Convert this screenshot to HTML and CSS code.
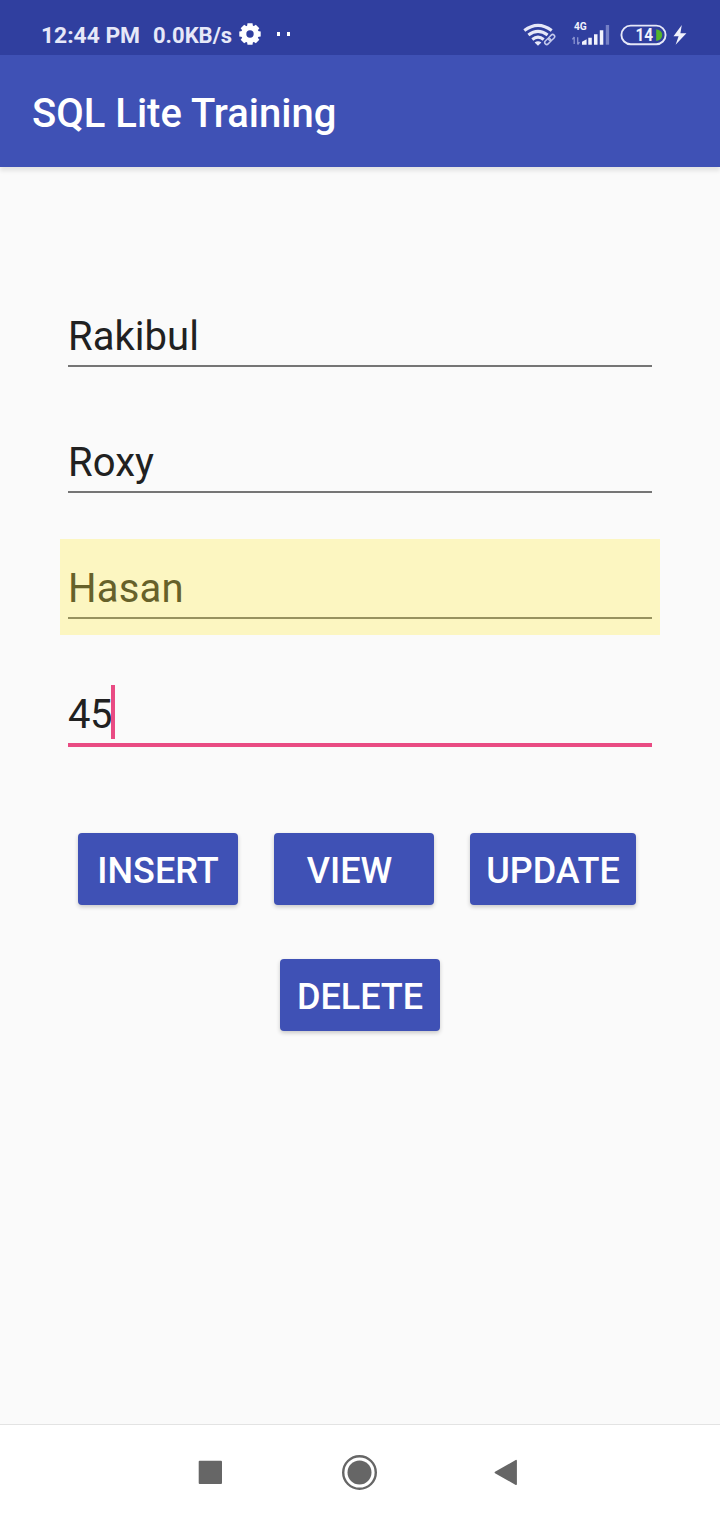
FILE: index.html
```html
<!DOCTYPE html>
<html lang="en">
<head>
<meta charset="utf-8">
<title>SQL Lite Training</title>
<link rel="stylesheet" href="styles.css">
</head>
<body>
<div class="screen">
  <div class="status">
    <span class="clock">12:44 PM</span>
    <span class="speed">0.0KB/s</span>
    <svg class="gear" width="24" height="24" viewBox="-12 -12 24 24">
      <g fill="#fff">
        <path id="tooth" d="M-3-7.5L-2.5-10.7H2.5L3-7.5V7.5L2.5 10.7H-2.5L-3 7.5Z"/>
        <use href="#tooth" transform="rotate(45)"/>
        <use href="#tooth" transform="rotate(90)"/>
        <use href="#tooth" transform="rotate(135)"/>
        <circle r="8.8"/>
      </g>
      <circle r="3.7" fill="#303f9f"/>
    </svg>
    <svg class="dots" width="14" height="4" viewBox="0 0 14 4"><path fill="#fff" d="M0 0h3v4H0zM10 0h3v4h-3z"/></svg>
    <svg class="indicators" width="170" height="30" viewBox="520 20 170 30">
      <g fill="none" stroke="#e6e8f8" stroke-width="3.1">
        <path d="M524.3 30.6Q538 20.3 551.7 30.6"/>
        <path d="M528.4 35.1Q538 27.7 547.6 35.1"/>
        <path d="M532.3 39.4Q538 35 543.7 39.4"/>
      </g>
      <path d="M534.6 42.6Q538 39.7 541.4 42.6L538 45.7Z" fill="#e6e8f8"/>
      <rect x="542.7" y="36.4" width="14" height="6.2" rx="3.1" transform="rotate(-45 549.7 39.5)" fill="#303f9f"/>
      <g fill="none" stroke="#c3c9ed" stroke-width="1.5" transform="rotate(-45 549.7 39.5)">
        <rect x="543.5" y="37.5" width="7" height="4" rx="2"/>
        <rect x="548.9" y="37.5" width="7" height="4" rx="2"/>
      </g>
      <text x="574" y="30.2" class="network">4G</text>
      <path d="M574.2 44V37M572.4 39.3L574.3 37M577.7 37.2V44.5M577.7 44.5L579.5 42.1" fill="none" stroke="#8b95d2" stroke-width="1.3"/>
      <path d="M582 44.7V41.8L586.6 39.3V44.7ZM588.3 37.8h3.5v6.9h-3.5zM594 34.3h3.5v10.4h-3.5zM599.8 30.3h3.5v14.4h-3.5z" fill="#f1f2fc"/>
      <rect x="605.8" y="25" width="3.3" height="19.7" fill="#7580c6"/>
      <rect x="621.4" y="25.6" width="44.2" height="18.6" rx="9.3" fill="none" stroke="#e6e8f8" stroke-width="1.9"/>
      <path d="M656.2 29.2Q662.2 30 662.2 35.1Q662.2 40.2 656.2 41Z" fill="#55b52b"/>
      <text x="635.4" y="41.3" class="battery" textLength="17.6" lengthAdjust="spacingAndGlyphs">14</text>
      <path d="M681.8 25L673.5 36.2H678.6L675.6 44.8L686.4 33.2H680.4Z" fill="#f1f2fc"/>
    </svg>
  </div>
  <header class="appbar"><h1 class="title">SQL Lite Training</h1></header>
  <main class="content">
    <form class="form">
      <div class="field"><span class="value">Rakibul</span></div>
      <div class="field"><span class="value">Roxy</span></div>
      <div class="field highlighted"><span class="value">Hasan</span></div>
      <div class="field focused"><span class="value">45</span><i class="caret"></i></div>
    </form>
    <div class="actions">
      <button class="button" type="button">INSERT</button>
      <button class="button view" type="button">VIEW</button>
      <button class="button update" type="button">UPDATE</button>
    </div>
    <div class="actions delete-row">
      <button class="button" type="button">DELETE</button>
    </div>
  </main>
  <nav class="navbar">
    <svg width="24" height="24" viewBox="0 0 24 24"><rect x=".7" y=".7" width="23.3" height="23.3" rx="1" fill="#666"/></svg>
    <svg class="home" width="36" height="36" viewBox="0 0 36 36"><circle cx="17.5" cy="18.5" r="16.3" fill="none" stroke="#666" stroke-width="2.4"/><circle cx="17.5" cy="18.5" r="12" fill="#666"/></svg>
    <svg class="back" width="24" height="28" viewBox="0 0 24 28"><path d="M22.1 2.7V26.3L1.4 14.5Z" fill="#666" stroke="#666" stroke-width="1.6" stroke-linejoin="round"/></svg>
  </nav>
</div>
</body>
</html>
```
FILE: styles.css
```css
* { box-sizing: border-box; }
body { margin: 0; font-family: Roboto, sans-serif; background: #fafafa; }
.screen { width: 720px; height: 1520px; display: flex; flex-direction: column; }
.status {
  height: 55px;
  padding: 14px 30px 0 41px;
  display: flex;
  align-items: center;
  background: #303f9f;
  color: #e6e8f8;
  font-weight: 700;
  line-height: 28px;
  white-space: nowrap;
}
.clock { width: 112px; padding-top: 2px; font-size: 22.8px; }
.speed { width: 85px; padding-top: 2px; font-size: 22px; }
.gear { margin-bottom: 2px; }
.dots { margin-left: 15px; margin-bottom: 2px; }
.indicators { margin-left: auto; }
.network { font-size: 10.2px; font-weight: 700; fill: #f1f2fc; }
.battery { font-size: 18px; font-weight: 700; fill: #f1f2fc; }
.appbar {
  height: 112px;
  padding: 6px 32px 0;
  display: flex;
  align-items: center;
  background: #3f51b5;
  box-shadow: 0 4px 4px rgba(0, 0, 0, .09);
}
.title { margin: 0; font-size: 40px; font-weight: 500; line-height: 48px; color: #fff; }
.content { flex: 1; padding: 120px 60px 0; }
.form { display: flex; flex-direction: column; gap: 30px; }
.field {
  height: 96px;
  padding: 26px 8px 16px;
  display: flex;
}
.value {
  flex: 1;
  height: 54px;
  border-bottom: 2px solid #757575;
  color: #212121;
  font-size: 40px;
  line-height: 48px;
  letter-spacing: .05px;
}
.highlighted { background: #fcf6c1; }
.highlighted .value { color: #66612a; border-color: #97925f; letter-spacing: .2px; }
.focused { position: relative; }
.focused .value { height: 56px; border-bottom: 4px solid #e94b83; letter-spacing: -.5px; }
.caret { position: absolute; left: 51px; top: 20px; width: 4px; height: 54px; background: #e94b83; }
.actions { display: flex; gap: 36px; margin: 72px 0 0 18px; }
.button {
  width: 160px;
  height: 72px;
  padding: 3px 0 0;
  border: 0;
  border-radius: 4px;
  background: #3f51b5;
  color: #fff;
  font: 500 36px/42px Roboto, sans-serif;
  box-shadow: 0 2px 4px rgba(0, 0, 0, .2);
}
.view { padding-right: 9px; }
.update { width: 166px; }
.delete-row { justify-content: center; margin: 54px 0 0; }
.navbar {
  height: 96px;
  padding: 0 202px 2px 198px;
  border-top: 1px solid #e3e3e3;
  background: #fff;
  display: flex;
  align-items: center;
  justify-content: space-between;
}
.home { margin-left: 3px; }
```
